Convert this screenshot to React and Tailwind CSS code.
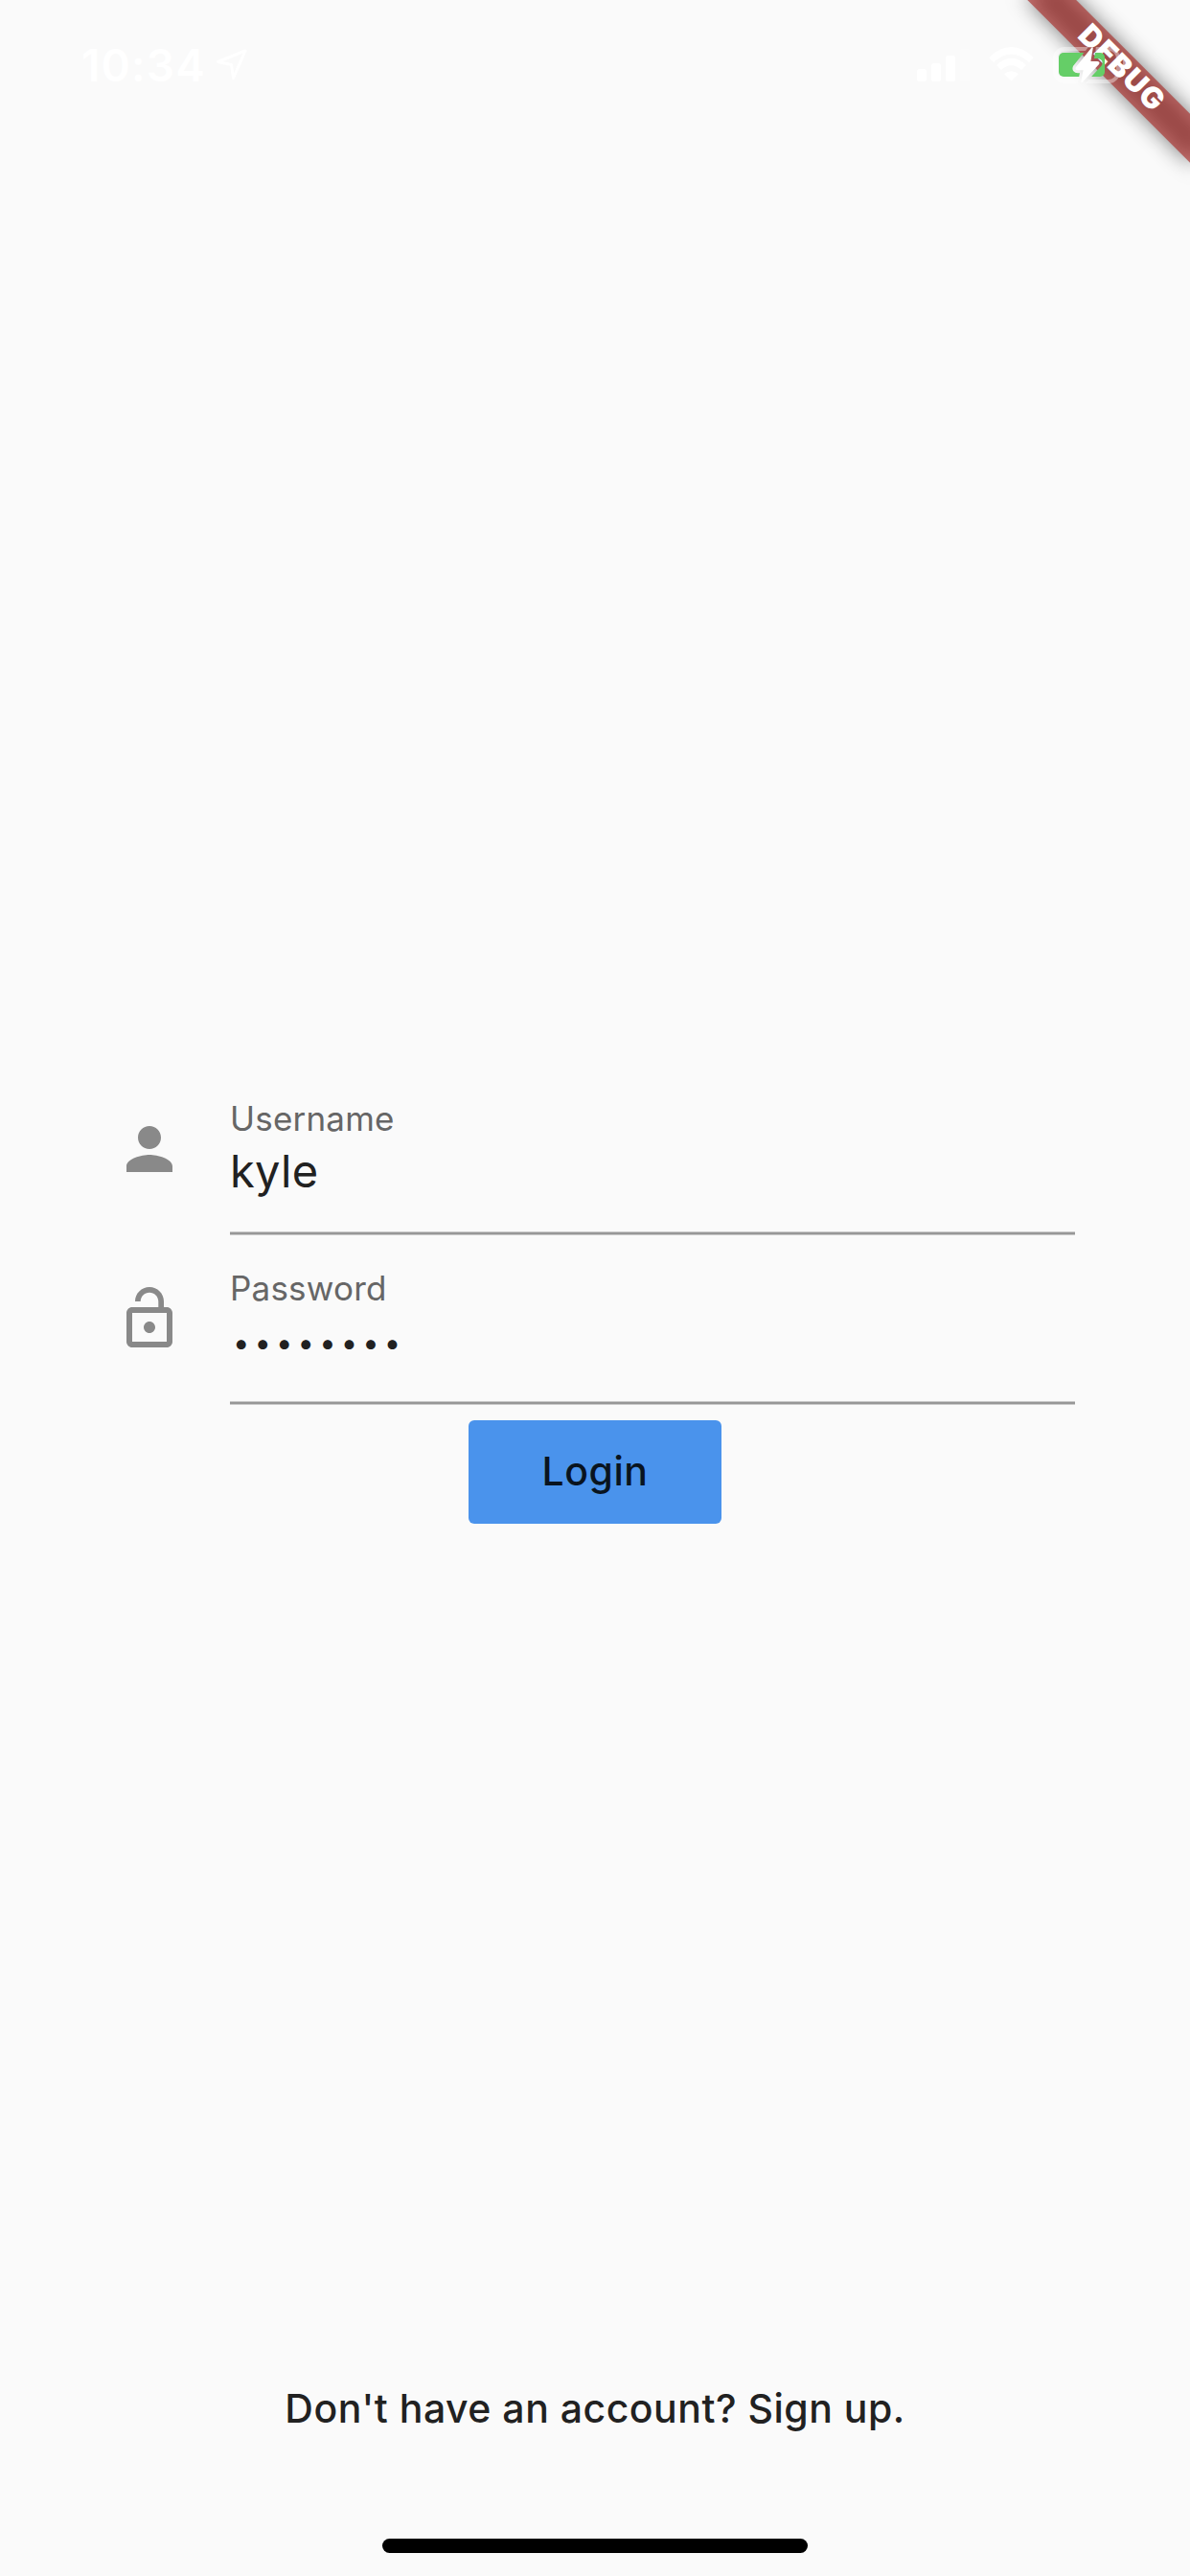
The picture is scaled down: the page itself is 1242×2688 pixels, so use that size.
const BOLT = "M41 4 24.500 24.500Q23.500 26.500 26 26.500H32.500L30 39.500 47.500 20.500Q48.500 18.700 46 18.700H38.500Z";
const PERSON = "M12 12c2.210 0 4-1.790 4-4s-1.790-4-4-4-4 1.790-4 4 1.790 4 4 4zm0 2c-2.670 0-8 1.340-8 4v2h16v-2c0-2.660-5.330-4-8-4z";
const LOCK_OPEN = "M12 17c1.100 0 2-.9 2-2s-.9-2-2-2-2 .9-2 2 .9 2 2 2zm6-9h-1V6c0-2.760-2.240-5-5-5S7 3.240 7 6h1.900c0-1.710 1.390-3.100 3.100-3.100s3.100 1.390 3.100 3.100v2H6c-1.100 0-2 .9-2 2v10c0 1.100.9 2 2 2h12c1.100 0 2-.9 2-2V10c0-1.100-.9-2-2-2zm0 12H6V10h12v10z";

function StatusBar() {
  return (
    <header className="relative z-10 flex h-[132px] shrink-0 items-start justify-between pt-[40px] pl-[85px] pr-[65px] text-white">
      <div className="flex items-start">
        <span className="w-[132px] whitespace-nowrap text-[46px] leading-[56px] font-semibold tracking-[1.1px]">10:34</span>
        <svg className="ml-[8px] mt-[10px] h-[34px] w-[34px]" viewBox="0 0 34 34" fill="none" stroke="currentColor" strokeWidth="3" strokeLinejoin="round">
          <path d="M31 3 2.500 14.500 16.500 17.500 18.500 31.500Z" />
        </svg>
      </div>
      <div className="flex items-start">
        <svg className="mt-[10px] h-[36px] w-[56px]" viewBox="0 0 56 36" fill="currentColor">
          <rect x="0" y="22" width="10" height="13" rx="2.500" />
          <rect x="15" y="16" width="10" height="19" rx="2.500" />
          <rect x="30" y="8" width="10" height="27" rx="2.500" />
          <rect x="45" y="1" width="10" height="34" rx="2.500" opacity=".3" />
        </svg>
        <svg className="ml-[19px] mt-[9px] h-[36px] w-[47px]" viewBox="0 0 47 36" fill="none" stroke="currentColor" strokeWidth="7">
          <path d="M2.500 13.500Q23.500-6 44.500 13.500" />
          <path d="M10.500 21.500Q23.500 9.500 36.500 21.500" />
          <path d="M16 28Q23.500 22.500 31 28L23.500 35.500Z" fill="currentColor" stroke="none" />
        </svg>
        <svg className="ml-[20px] mt-[6px] h-[44px] w-[78px]" viewBox="0 0 78 44">
          <mask id="bolt-gap" maskUnits="userSpaceOnUse" x="0" y="0" width="78" height="44">
            <rect width="78" height="44" fill="#fff" />
            <path d={BOLT} fill="#000" stroke="#000" strokeWidth="7.500" strokeLinejoin="round" />
          </mask>
          <g mask="url(#bolt-gap)">
            <rect x="2" y="5" width="66" height="34" rx="10" fill="none" stroke="#fff" strokeWidth="4" opacity=".4" />
            <path d="M73 16.500a7 7 0 0 1 0 12z" fill="#fff" opacity=".4" />
            <rect x="6" y="9" width="48" height="25" rx="5" fill="#65ce67" />
          </g>
          <path d={BOLT} fill="#fff" stroke="#fff" strokeWidth="1.500" strokeLinejoin="round" />
        </svg>
      </div>
    </header>
  );
}

function DebugBanner() {
  return (
    <div className="pointer-events-none absolute right-0 top-0 h-[200px] w-[260px] overflow-hidden">
      <div className="absolute left-[140px] top-[84px] h-[36px] w-[240px] origin-[120px_-84px] rotate-45">
        <div className="absolute inset-0 bg-black/50 blur-[11px]" />
        <div className="absolute inset-0 flex items-center justify-center bg-[#aa2825]/63 text-[31px] leading-none font-black tracking-[1px] text-white">
          <span className="-mt-[5px]">DEBUG</span>
        </div>
      </div>
    </div>
  );
}

function Field({ icon, label, children }) {
  return (
    <div className="flex h-[177px] pl-[120px] pr-[120px]">
      <svg className="mt-[51px] h-[72px] w-[72px] shrink-0" viewBox="0 0 24 24" fill="#898989">
        <path d={icon} />
      </svg>
      <div className="ml-[48px] flex h-[177px] flex-1 flex-col border-b border-[#c9c9c9]">
        <label className="mt-[37px] h-[36px] text-[35px] leading-[36px] tracking-[0.2px] text-[#666]">{label}</label>
        <div className="h-[100px] pt-[9px] leading-[56px]">{children}</div>
        <div className="h-px bg-[#c9c9c9]" />
        <div className="h-[2px] bg-[#979797]" />
      </div>
    </div>
  );
}

export default function App() {
  return (
    <div className="relative flex h-[2688px] w-[1242px] flex-col overflow-hidden bg-[#fafafa] font-['Inter',sans-serif] text-[#212121]">
      <DebugBanner />
      <StatusBar />
      <main className="flex flex-1 flex-col pt-[980px]">
        <Field icon={PERSON} label="Username">
          <span className="block text-[47px] tracking-[0.3px]">kyle</span>
        </Field>
        <Field icon={LOCK_OPEN} label="Password">
          <span className="block pt-[2px] pl-[3px] text-[31px] tracking-[5.1px]">••••••••</span>
        </Field>
        <button className="mt-[16px] flex h-[108px] w-[264px] items-center justify-center self-center rounded-[6px] bg-[#4a93ec] text-[41px] font-medium tracking-[0.5px] text-[#09141f]">
          Login
        </button>
        <a className="mt-auto mb-[108px] self-center whitespace-nowrap text-[41px] leading-[56px] font-medium tracking-[0.5px]">
          Don't have an account? Sign up.
        </a>
      </main>
      <footer className="mb-[24px] h-[15px] w-[444px] shrink-0 self-center rounded-full bg-black" />
    </div>
  );
}
